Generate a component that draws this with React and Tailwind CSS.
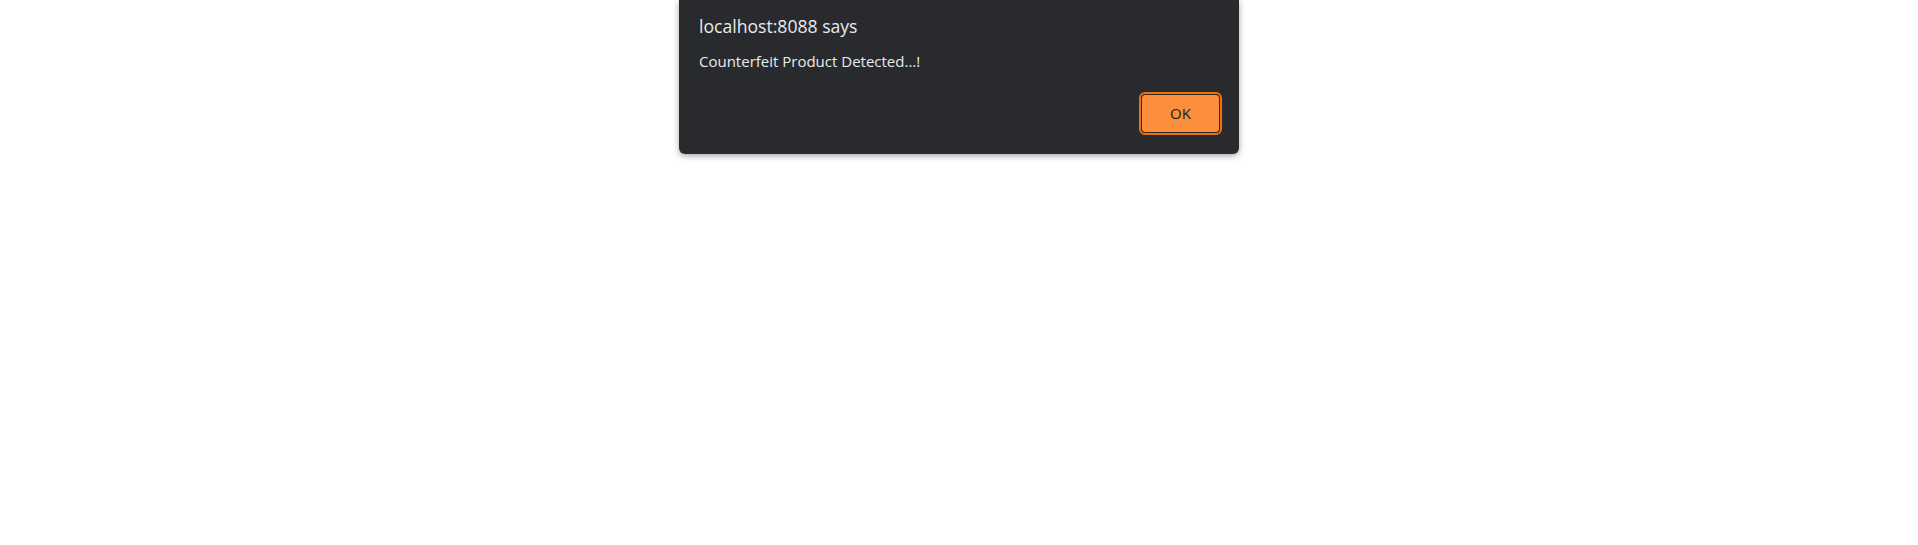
export default function App() {
  return (
    <div className="w-full h-[545px] bg-white" style={{ fontFamily: "'Open Sans', 'Noto Sans', sans-serif" }}>
      <div className="mx-auto w-[560px] bg-[#292a2d] rounded-b-md shadow-[0_2px_6px_rgba(0,0,0,0.35)] pt-[14px] pb-[19px] pl-5 pr-[17px]">
        <h1 className="text-[17.6px] leading-[24px] text-[#e8eaed] font-normal">localhost:8088 says</h1>
        <p className="mt-[13px] text-[15px] leading-[20px] text-[#e8eaed]">Counterfeit Product Detected...!</p>
        <div className="flex justify-end mt-[21px]">
          <button
            type="button"
            className="w-[83px] h-[43px] rounded-[6px] border-2 border-[#e8730f] p-0 flex"
          >
            <span className="flex-1 flex items-center justify-center rounded-[4px] border border-[#3b2a1c] bg-[#fb8f3e] text-[15px] text-[#202124]">
              OK
            </span>
          </button>
        </div>
      </div>
    </div>
  )
}
